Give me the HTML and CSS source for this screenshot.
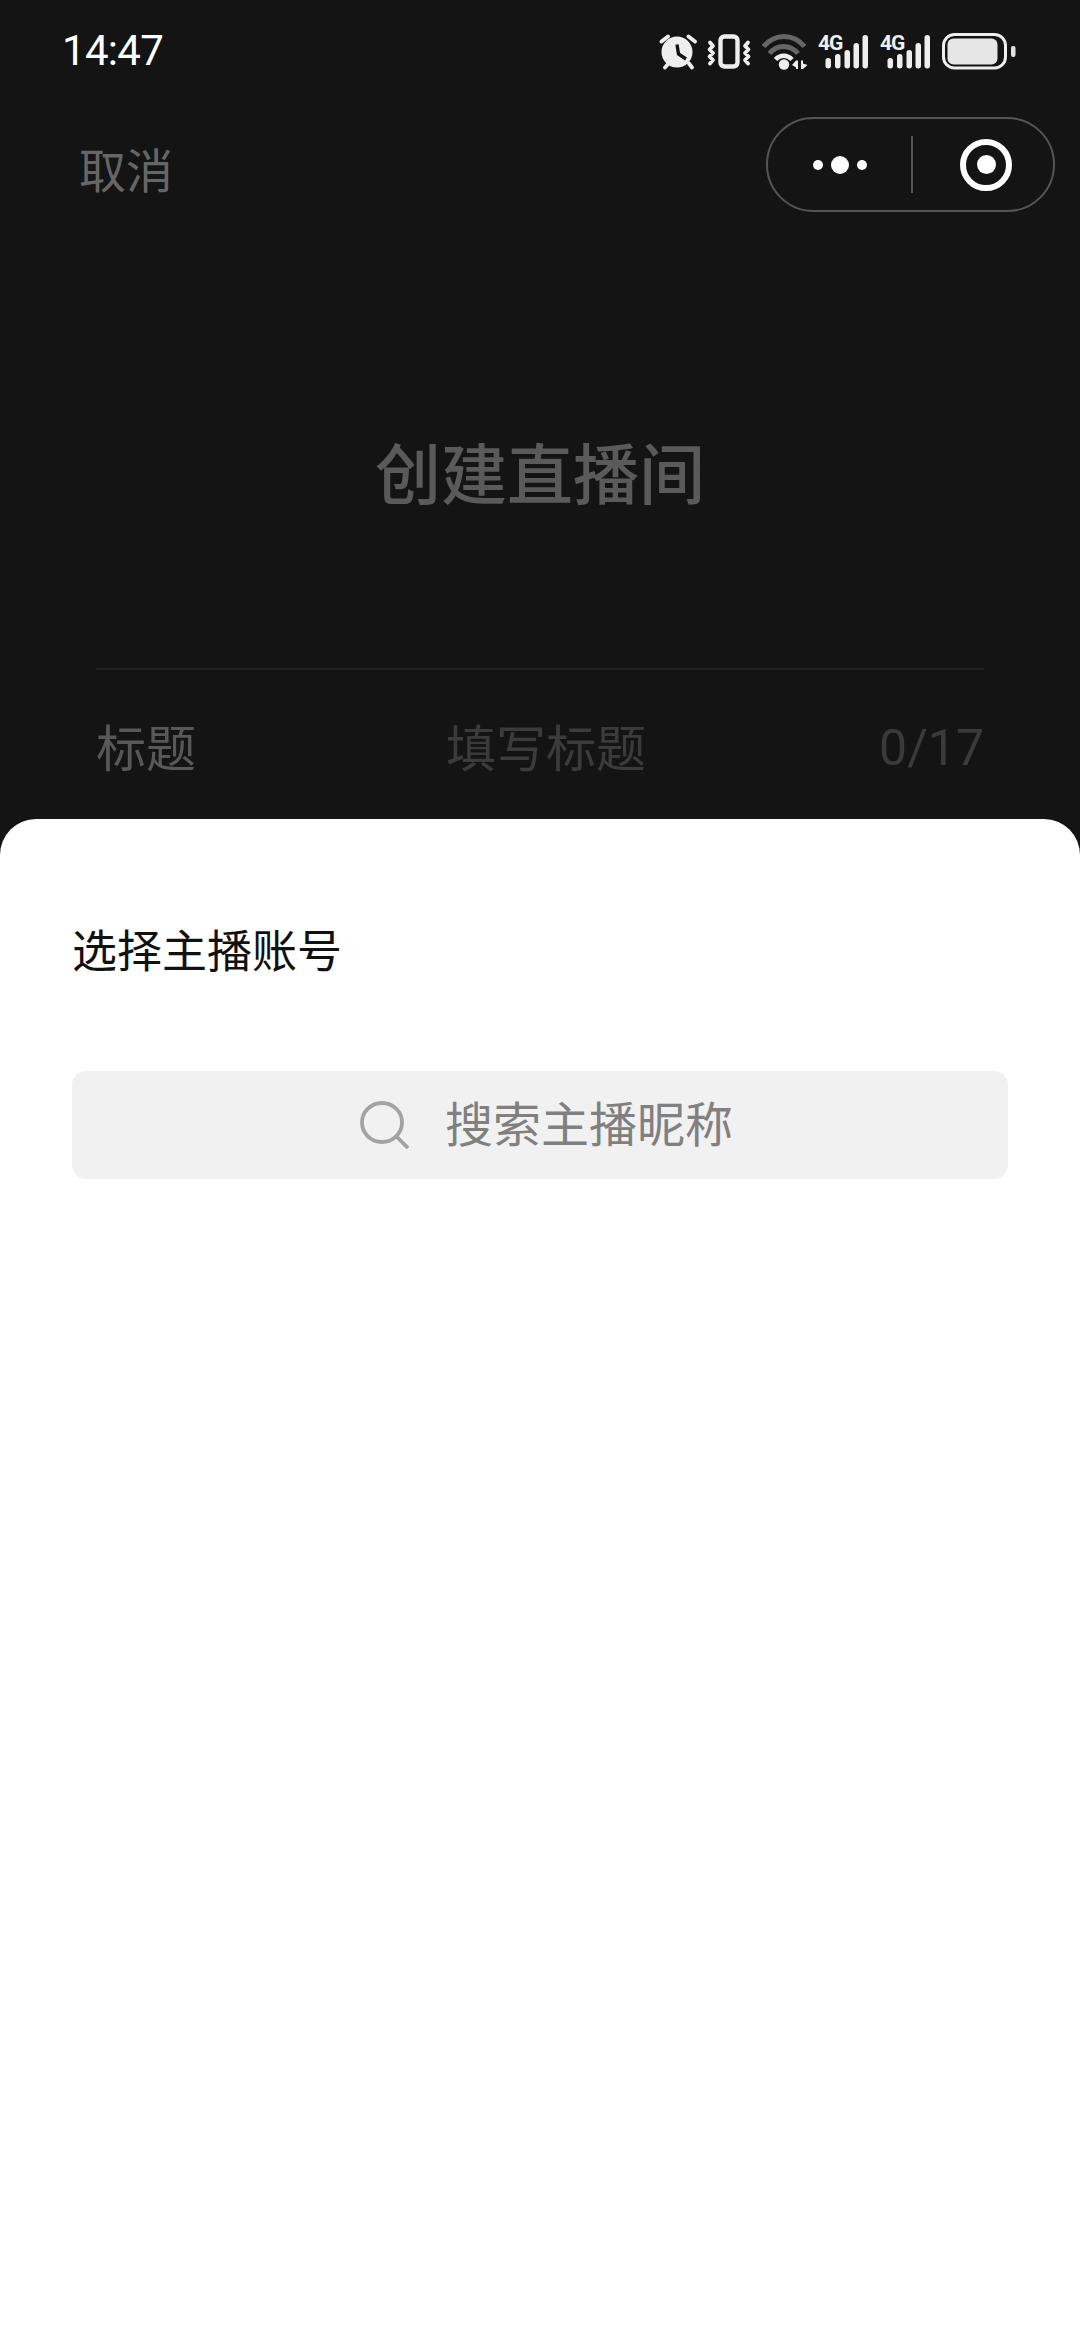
FILE: index.html
```html
<!DOCTYPE html>
<html lang="zh-CN">
<head>
<meta charset="utf-8">
<title>创建直播间</title>
<link rel="stylesheet" href="styles.css">
</head>
<body>
<div class="page">
  <section class="behind">
    <header class="status">
      <span class="time">14:47</span>
      <div class="status-icons">
        <svg class="ic-alarm" viewBox="659 30 40 40">
          <circle cx="677" cy="51" r="15.500" fill="#eee"/>
          <path d="M677 43.500 678.500 53 686 58" fill="none" stroke="#141414" stroke-width="3.400"/>
          <path d="M661.500 40.500 668 35.500M688.500 35.500 695 40.500M665 66.500 668.500 62.500M689 62.500 692 66.500" stroke="#eee" stroke-width="3.800" stroke-linecap="round" fill="none"/>
        </svg>
        <svg class="ic-vibrate" viewBox="705 30 50 40">
          <rect x="720.500" y="35.500" width="17" height="30" rx="4" fill="none" stroke="#eee" stroke-width="4.400"/>
          <path d="M710 41.500 713 45 709.500 48.500 713 52 709.500 55.500 713 59 710 62.500M748 41.500 745 45 748.500 48.500 745 52 748.500 55.500 745 59 748 62.500" fill="none" stroke="#eee" stroke-width="3.800" stroke-linejoin="round" stroke-linecap="round"/>
        </svg>
        <svg class="ic-wifi" viewBox="760 30 50 40">
          <path d="M763.500 45.500C775 32 793 32 804.500 45.500" fill="none" stroke="#666" stroke-width="5"/>
          <path d="M769.500 52.500C777 43 790 43 798 52.500" fill="none" stroke="#666" stroke-width="5"/>
          <path d="M775.500 58.500C780 53.500 787.500 53.500 792 58.500" fill="none" stroke="#eee" stroke-width="4.600"/>
          <circle cx="784" cy="63.500" r="5.200" fill="#eee"/>
          <path d="M798 59.500v8.500h-2v-1.500l-4-2.500 4-4.500zM801 59.500v8.500h2l4.500-4-4.500-1.500v-3z" fill="#eee"/>
        </svg>
        <svg class="ic-signal" viewBox="815 30 55 40">
          <text class="net" x="818" y="49">4G</text>
          <g fill="#eee">
            <rect x="825.500" y="57" width="5.500" height="10.500" rx="2.700"/>
            <rect x="835" y="53" width="5.500" height="14.500" rx="2.700"/>
            <rect x="844.500" y="49" width="5.500" height="18.500" rx="2.700"/>
            <rect x="853.500" y="42" width="5.500" height="25.500" rx="2.700"/>
            <rect x="862.500" y="34" width="5.500" height="33.500" rx="2.700"/>
          </g>
        </svg>
        <svg class="ic-signal" viewBox="815 30 55 40">
          <text class="net" x="818" y="49">4G</text>
          <g fill="#eee">
            <rect x="825.500" y="57" width="5.500" height="10.500" rx="2.700"/>
            <rect x="835" y="53" width="5.500" height="14.500" rx="2.700"/>
            <rect x="844.500" y="49" width="5.500" height="18.500" rx="2.700"/>
            <rect x="853.500" y="42" width="5.500" height="25.500" rx="2.700"/>
            <rect x="862.500" y="34" width="5.500" height="33.500" rx="2.700"/>
          </g>
        </svg>
        <svg class="ic-battery" viewBox="940 30 78 40">
          <rect x="943.500" y="33.500" width="62" height="33.500" rx="11" fill="none" stroke="#eee" stroke-width="3"/>
          <rect x="947.500" y="37.500" width="50" height="26" rx="6" fill="#e6e6e6"/>
          <rect x="1011" y="45" width="4.500" height="11" rx="2" fill="#e0e0e0"/>
        </svg>
      </div>
    </header>

    <nav class="nav">
      <span class="cancel">取消</span>
      <div class="capsule">
        <div class="more" aria-label="更多">
          <i class="dot"></i><i class="dot dot-big"></i><i class="dot"></i>
        </div>
        <i class="capsule-line"></i>
        <div class="target"><i class="target-dot"></i></div>
      </div>
    </nav>

    <h1 class="heading">创建直播间</h1>

    <div class="form-row">
      <span class="label">标题</span>
      <span class="placeholder">填写标题</span>
      <span class="count">0/17</span>
    </div>
  </section>

  <section class="sheet">
    <h2 class="sheet-title">选择主播账号</h2>
    <div class="search">
      <svg class="search-icon" viewBox="0 0 50 48">
        <ellipse cx="22" cy="21.500" rx="20" ry="19.500" fill="none" stroke="#a3a3a3" stroke-width="3.800"/>
        <path d="M36 35 48 47" stroke="#a3a3a3" stroke-width="3.800" fill="none"/>
      </svg>
      <span class="search-text">搜索主播昵称</span>
    </div>
  </section>
</div>
</body>
</html>
```
FILE: styles.css
```css
* { box-sizing: border-box; }
html, body { margin: 0; padding: 0; }
body {
  width: 1080px;
  height: 2340px;
  overflow: hidden;
  background: #141414;
  font-family: "Noto Sans CJK SC", "Noto Sans", sans-serif;
}
.page { display: flex; flex-direction: column; height: 2340px; }

.behind { height: 819px; flex: none; overflow: hidden; background: #141414; }

.status {
  height: 102px;
  display: flex;
  align-items: center;
  justify-content: space-between;
  padding: 0 62px;
}
.time {
  font-family: Roboto, sans-serif;
  font-size: 42px;
  font-weight: 400;
  line-height: 50px;
  color: #fff;
  letter-spacing: -0.7px;
}
.status-icons { display: flex; align-items: center; height: 40px; }
.status-icons svg { height: 40px; display: block; flex: none; }
.ic-alarm { width: 40px; }
.ic-vibrate { width: 50px; margin-left: 6px; }
.ic-wifi { width: 50px; margin-left: 5px; }
.ic-signal { width: 55px; margin-left: 5px; }
.ic-signal + .ic-signal { margin-left: 7px; }
.ic-battery { width: 78px; margin-left: 8px; }
.net {
  font-family: Roboto, sans-serif;
  font-weight: 700;
  font-size: 21px;
  letter-spacing: -1px;
  fill: #eee;
}

.nav {
  display: flex;
  justify-content: space-between;
  align-items: flex-start;
  margin-top: 15px;
  padding: 0 25px 0 79px;
}
.cancel {
  font-size: 47px;
  line-height: 60px;
  margin-top: 21px;
  color: #666;
}
.capsule {
  width: 289px;
  height: 95px;
  border: 2px solid #555;
  border-radius: 48px;
  display: flex;
  align-items: center;
}
.more { width: 143px; display: flex; align-items: center; justify-content: center; gap: 8px; padding-left: 0; }
.dot { width: 10px; height: 10px; border-radius: 50%; background: #fff; display: block; }
.dot-big { width: 18px; height: 18px; }
.capsule-line { width: 2px; height: 57px; background: #555; display: block; }
.target {
  width: 52px;
  height: 52px;
  margin-left: 47px;
  border: 6px solid #fff;
  border-radius: 50%;
  display: flex;
  align-items: center;
  justify-content: center;
}
.target-dot { width: 19px; height: 19px; border-radius: 50%; background: #fff; display: block; }

.heading {
  margin: 216px 0 0;
  text-align: center;
  font-size: 66px;
  line-height: 84px;
  font-weight: 500;
  color: #5a5a5a;
}

.form-row {
  margin: 156px 96px 0;
  border-top: 2px solid #222;
  height: 152px;
  display: grid;
  grid-template-columns: 350px 1fr auto;
  align-items: center;
}
.label { font-size: 50px; line-height: 60px; color: #585858; }
.placeholder { font-size: 50px; line-height: 60px; color: #3b3b3b; }
.count { font-family: Roboto, sans-serif; font-size: 50px; line-height: 60px; font-weight: 400; color: #3a3a3a; margin-top: 6px; }

.sheet {
  flex: 1;
  background: #fff;
  border-radius: 36px 36px 0 0;
  padding: 0 72px;
}
.sheet-title {
  margin: 100px 0 0;
  font-size: 45px;
  line-height: 60px;
  font-weight: 400;
  color: #111;
}
.search {
  margin-top: 92px;
  height: 108px;
  background: #f1f1f1;
  border-radius: 14px;
  display: flex;
  align-items: center;
  padding-left: 288px;
}
.search-icon { width: 50px; height: 48px; flex: none; display: block; }
.search-text { margin: 0 0 8px 35px; font-size: 48px; line-height: 60px; color: #808080; }
```
